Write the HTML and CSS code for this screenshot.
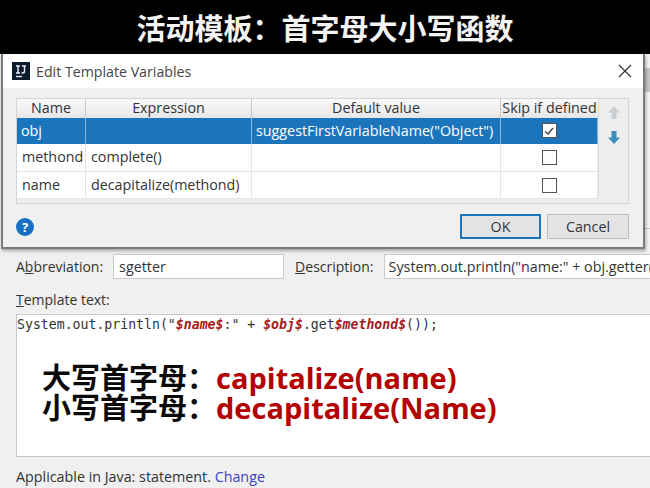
FILE: index.html
```html
<!DOCTYPE html>
<html lang="zh">
<head>
<meta charset="utf-8">
<title>活动模板</title>
<link rel="stylesheet" href="styles.css">
</head>
<body>
<header class="banner">活动模板：首字母大小写函数</header>
<main class="stage">
  <section class="form">
    <div class="fields">
      <span class="label">A<u>b</u>breviation:</span>
      <span class="input abbr">sgetter</span>
      <span class="label desc-label"><u>D</u>escription:</span>
      <span class="input desc">System.out.println("name:" + obj.getter(</span>
    </div>
    <div class="label tpl-label"><u>T</u>emplate text:</div>
    <div class="editor">
      <div class="code">System.out.println(<span class="str">"</span><b class="var">$name$</b><span class="str">:"</span> + <b class="var">$obj$</b>.get<b class="var">$methond$</b>());</div>
      <div class="note">
        <div class="note-line"><span class="zh">大写首字母：</span><span class="fn">capitalize(name)</span></div>
        <div class="note-line"><span class="zh">小写首字母：</span><span class="fn">decapitalize(Name)</span></div>
      </div>
    </div>
    <div class="applicable">Applicable in Java: statement. <a class="change">Change</a></div>
  </section>
  <div class="scrollbar"></div>
  <div class="tick"></div>
  <section class="dialog">
    <div class="titlebar">
      <svg class="logo" width="18" height="18" viewBox="0 0 18 18"><rect width="18" height="18" fill="#0c1a2e"/><path d="M4 4h4M6 4v7M4 11h4M10 4h4M12.500 4v5.500q0 1.500-2 1.500H9.500" stroke="#e8eef4" stroke-width="1.400" fill="none"/><path d="M4 14.500h6" stroke="#e8eef4" stroke-width="1.400"/></svg>
      <span class="dialog-title">Edit Template Variables</span>
      <svg class="close" width="14" height="14" viewBox="0 0 14 14"><path d="M1 1l12 12M13 1L1 13" stroke="#333" stroke-width="1.200"/></svg>
    </div>
    <div class="dialog-body">
      <div class="table-box">
        <div class="grid">
          <div class="th">Name</div><div class="th">Expression</div><div class="th">Default value</div><div class="th skip">Skip if defined</div>
          <div class="td sel">obj</div><div class="td sel"></div><div class="td sel">suggestFirstVariableName("Object")</div><div class="td sel mid"><span class="check on"><svg width="12" height="12" viewBox="0 0 12 12"><path d="M2 6.500l3 2.500 5-6" stroke="#444" stroke-width="1.400" fill="none"/></svg></span></div>
          <div class="td">methond</div><div class="td">complete()</div><div class="td"></div><div class="td mid"><span class="check"></span></div>
          <div class="td">name</div><div class="td">decapitalize(methond)</div><div class="td"></div><div class="td mid"><span class="check"></span></div>
        </div>
        <div class="side">
          <svg width="14" height="15" viewBox="0 0 14 15"><path d="M7 1L1 7.500h3.500V14h5V7.500H13z" fill="#c9cfd3"/></svg>
          <svg width="14" height="15" viewBox="0 0 14 15"><path d="M7 14L1 7.500h3.500V1h5v6.500H13z" fill="#3a8fc0"/></svg>
        </div>
      </div>
      <div class="actions">
        <span class="help">?</span>
        <span class="btn ok">OK</span>
        <span class="btn">Cancel</span>
      </div>
    </div>
  </section>
</main>
</body>
</html>
```
FILE: styles.css
```css
* { box-sizing: border-box; }
html, body { margin: 0; padding: 0; }
body {
  width: 650px;
  height: 488px;
  overflow: hidden;
  background: #f0f0f0;
  font-family: "Open Sans", "Noto Sans", "Noto Sans CJK SC", sans-serif;
  color: #333;
}
.banner {
  height: 54px;
  background: #000;
  color: #f4f4f4;
  font: 700 29px/54px "Noto Sans CJK SC", sans-serif;
  text-align: center;
}
.stage { position: relative; height: 434px; }
.scrollbar {
  position: absolute;
  right: 0;
  top: 14px;
  width: 5px;
  height: 24px;
  background: #c4c4c4;
}
.tick {
  position: absolute;
  right: 0;
  top: 174px;
  width: 5px;
  height: 1px;
  background: #c8c8c8;
}
.form { padding: 200px 0 0 16px; }
.fields { display: flex; align-items: center; height: 25px; }
.label { font-size: 14px; color: #333; white-space: nowrap; }
.input {
  display: block;
  height: 25px;
  background: #fff;
  border: 1px solid #c9c9c9;
  font-size: 14.300px;
  line-height: 23px;
  white-space: nowrap;
  overflow: hidden;
}
.abbr { width: 171px; margin-left: 10px; padding-left: 5px; }
.desc-label { margin-left: 11px; }
.desc { flex: 1; margin-left: 10px; padding-left: 4px; border-right: 0; }
.tpl-label { margin-top: 11px; line-height: 19px; }
.editor {
  height: 143px;
  margin-top: 5px;
  background: #fff;
  border: 1px solid #c8c8c8;
  border-right: 0;
}
.code {
  font: 13.200px/18px "DejaVu Sans Mono", monospace;
  color: #333;
  padding-top: 1px;
  white-space: nowrap;
}
.str { color: #333; }
.var { color: #a5191c; font-style: italic; }
.note { padding: 27px 0 0 25px; }
.note-line { height: 30px; white-space: nowrap; line-height: 30px; }
.zh { color: #0a0a0a; font: 700 29px/30px "Noto Sans CJK SC", sans-serif; }
.fn { color: #b30000; font: 700 29px/30px "Open Sans", sans-serif; }
.applicable { margin-top: 10px; font-size: 14.300px; line-height: 19px; white-space: nowrap; }
.change { color: #3b3fc4; }
.dialog {
  position: absolute;
  left: 1px;
  top: 0;
  width: 644px;
  height: 195px;
  background: #f0f0f0;
  border: 2px solid #7a7a7a;
  border-top: 0;
  box-shadow: 1px 2px 3px rgba(0,0,0,.3);
}
.titlebar { display: flex; align-items: center; height: 34px; background: #fff; padding: 0 11px 0 9px; }
.logo { flex: none; }
.dialog-title { margin-left: 6px; font-size: 14.200px; color: #444; flex: 1; }
.dialog-body { padding: 10px 13px 0 13px; }
.table-box {
  display: flex;
  width: 613px;
  height: 106px;
  border: 1px solid #d4d4d4;
  background: #eee;
}
.grid {
  display: grid;
  grid-template-columns: 69px 166px 249px 97px;
  grid-template-rows: 19px 26px 28px 27px;
  align-self: flex-start;
  background: #fff;
  border-right: 1px solid #ddd;
  font-size: 14.300px;
}
.th {
  background: linear-gradient(#fafafa, #e6e6e6);
  border-right: 1px solid #c8c8c8;
  text-align: center;
  line-height: 18px;
  white-space: nowrap;
}
.skip { border-right: 0; }
.td {
  border-right: 1px solid #e4e4e4;
  border-bottom: 1px solid #e4e4e4;
  padding-left: 5px;
  line-height: 26px;
  white-space: nowrap;
  overflow: hidden;
}
.sel { background: #1b75bd; color: #fff; border-right-color: #8ab8dc; border-bottom-color: #1b75bd; padding-left: 4px; }
.mid { display: flex; align-items: center; justify-content: center; padding: 0; }
.check {
  display: flex;
  align-items: center;
  justify-content: center;
  width: 15px;
  height: 15px;
  background: #fff;
  border: 1.500px solid #555;
}
.side {
  flex: 1;
  display: flex;
  flex-direction: column;
  align-items: center;
  gap: 10px;
  padding-top: 6px;
}
.actions { display: flex; align-items: center; margin-top: 10px; height: 25px; width: 613px; }
.help {
  width: 18px;
  height: 18px;
  margin-top: 1px;
  border-radius: 50%;
  background: #1a6fc4;
  color: #fff;
  font: 700 13px/18px "Open Sans", sans-serif;
  text-align: center;
  margin-right: auto;
}
.btn {
  width: 82px;
  height: 25px;
  background: #e3e3e3;
  border: 1px solid #bdbdbd;
  font-size: 14.300px;
  line-height: 23px;
  text-align: center;
}
.ok { width: 81px; margin-right: 6px; border: 2px solid #1b75bd; line-height: 21px; }
```
